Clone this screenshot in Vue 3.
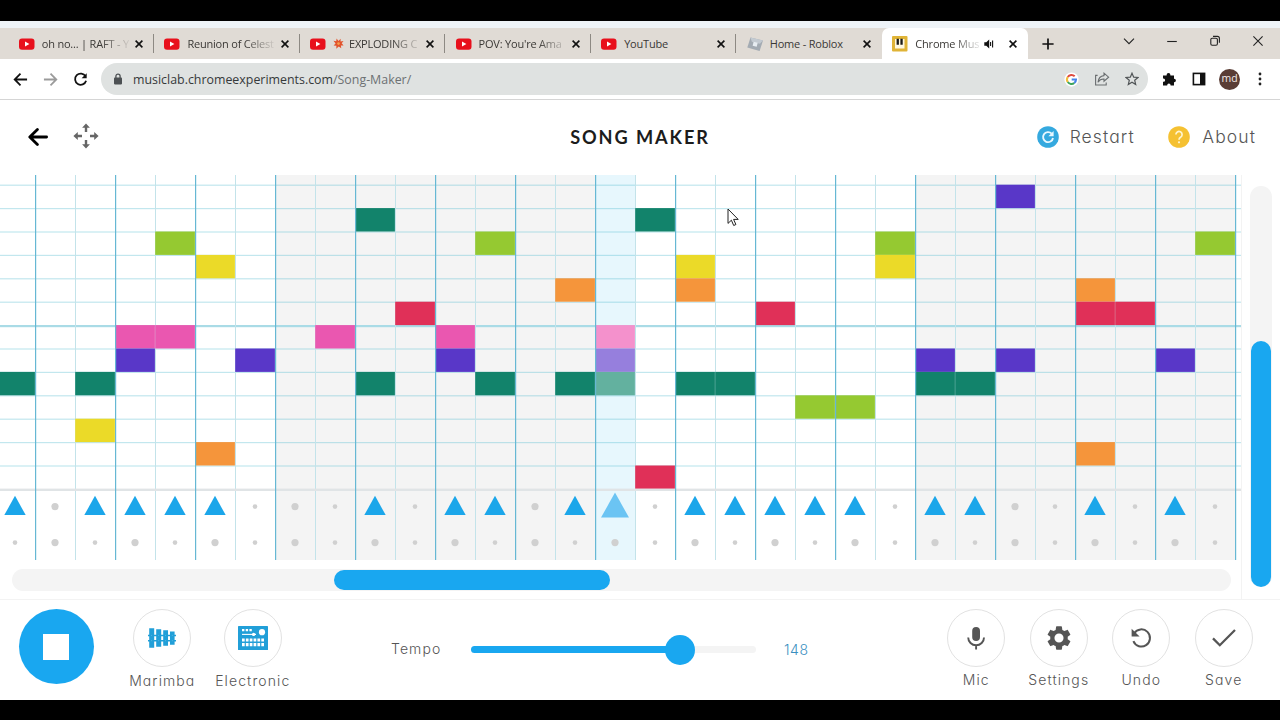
<template>
  <div class="screen">
    <div class="window">
      <div class="tab-strip">
        <div v-for="tab in tabs" :key="tab.title" class="tab" :class="{ active: tab.active }">
          <svg v-if="tab.icon === 'youtube'" class="favicon" viewBox="0 0 16 16">
            <rect x="0" y="2.5" width="15.5" height="11.2" rx="3" fill="#e8101c" />
            <path d="M6 5.6v5l4.4-2.5z" fill="#fff" />
          </svg>
          <svg v-else-if="tab.icon === 'roblox'" class="favicon" viewBox="0 0 16 16">
            <path d="M3.5 1.5L16 4.6 12.6 15 .3 11.6z" fill="#a3abb3" />
            <path d="M3.5 1.5L16 4.6l-3.2 3.2-8-2z" fill="#c3cad1" />
            <path d="M6.6 5.8l4.1 1-1 4-4.1-1z" fill="#e7edf2" />
          </svg>
          <svg v-else class="favicon" viewBox="0 0 16 16">
            <rect width="15.5" height="15.5" rx="1" fill="#e0b437" />
            <rect x="3" y="3" width="9.5" height="9.5" fill="#fff8df" />
            <path d="M4.6 2.8h2.3v6H4.6zM8.4 2.8h2.3v6H8.4z" fill="#1b1a18" />
          </svg>
          <div class="tab-title" :class="{ faded: tab.faded }">
            <svg v-if="tab.burst" class="burst" viewBox="0 0 12 12">
              <path d="M6 3.2L8.3.7l0 3 3.2-.5-2 2.6 2 2.3-2.9.1.4 2.9L6.2 9.2 3.6 11.6l.1-3.2L.6 8.1l2.2-2.2L.5 3l3 .5L3.9.6z" fill="#e2532c" />
              <circle cx="6" cy="6" r="1.5" fill="#f6a04c" />
            </svg>
            <span>{{ tab.title }}</span>
          </div>
          <svg v-if="tab.active" class="speaker" viewBox="0 0 10 10">
            <path d="M.3 3.2h2L5.2.6v8.8L2.3 6.8h-2z" fill="#111" />
            <path d="M6.6 3v4M8.6 1.6v6.8" stroke="#111" stroke-width="1.1" />
          </svg>
          <svg class="close" viewBox="0 0 10 10">
            <path d="M1.6 1.6l6.8 6.8M8.4 1.6L1.6 8.4" stroke="#111" stroke-width="1.6" />
          </svg>
        </div>
        <svg class="new-tab" viewBox="0 0 12 12">
          <path d="M6 .4v11.2M.4 6h11.2" stroke="#111" stroke-width="1.7" />
        </svg>
        <div class="window-buttons">
          <svg viewBox="0 0 12 12"><path d="M1 3.6l5 5 5-5" /></svg>
          <svg viewBox="0 0 12 12"><path d="M1.2 6.5h9.6" /></svg>
          <svg viewBox="0 0 12 12">
            <rect x="1.8" y="3.2" width="6.6" height="7" rx="1.4" />
            <path d="M4 1.4h4.4q2 0 2 2v4.4" />
          </svg>
          <svg viewBox="0 0 12 12"><path d="M1.4 1.4l9.2 9.2M10.6 1.4L1.4 10.6" /></svg>
        </div>
      </div>

      <div class="toolbar">
        <svg class="nav-icon" viewBox="0 0 16 16"><path d="M15 8H2M8 1.8L1.8 8 8 14.2" stroke="#111" /></svg>
        <svg class="nav-icon" viewBox="0 0 16 16"><path d="M1 8h13M8 1.8L14.2 8 8 14.2" stroke="#9b9b9b" /></svg>
        <svg class="nav-icon" viewBox="0 0 16 16">
          <path d="M13.4 4.6A6 6 0 1 0 14 9.4" stroke="#111" />
          <path d="M14.6 1.2v5.4H9.2z" fill="#111" />
        </svg>
        <div class="omnibox">
          <svg class="lock" viewBox="0 0 10 12">
            <rect x="1" y="4.6" width="8" height="6.8" rx=".8" fill="#4c5053" />
            <path d="M2.9 5V3.2a2.1 2.1 0 0 1 4.2 0V5" fill="none" stroke="#4c5053" stroke-width="1.3" />
          </svg>
          <div class="url">musiclab.chromeexperiments.com<span>/Song-Maker/</span></div>
          <svg class="google" viewBox="0 0 16 16">
            <circle cx="8" cy="8" r="7.6" fill="#fff" />
            <path d="M11.4 4.6A4.8 4.8 0 0 0 4 5.3" stroke="#de4b3f" />
            <path d="M4 5.3a4.8 4.8 0 0 0 0 5.4" stroke="#f1bd3a" />
            <path d="M4 10.7a4.8 4.8 0 0 0 7 1" stroke="#3da45b" />
            <path d="M11 11.7A4.8 4.8 0 0 0 12.8 8H8.2" stroke="#4683e8" />
          </svg>
          <svg class="share" viewBox="0 0 16 16">
            <path d="M3.6 4.4H1.6v9.6h10.6v-2.6" />
            <path d="M10 2.2l4.6 4-4.6 4V8Q6.2 7.8 4 11.2 4.6 5.2 10 4.6z" />
          </svg>
          <svg class="star" viewBox="0 0 14 14">
            <path d="M7 1.2l1.7 4 4.3.3-3.3 2.8 1 4.3L7 10.3l-3.7 2.3 1-4.3L1 5.5l4.3-.3z" />
          </svg>
        </div>
        <svg class="puzzle" viewBox="0 0 14 14">
          <path d="M1 3.6h3.6V3a1.9 1.9 0 0 1 3.8 0v.6H12v3.2h.2a1.7 1.7 0 0 1 0 3.4H12v3.4H8.6v-.4a1.7 1.7 0 0 0-3.4 0v.4H1v-3.8h.5a1.6 1.6 0 0 0 0-3.2H1z" fill="#111" />
        </svg>
        <svg class="side-panel" viewBox="0 0 14 14">
          <rect x="1.4" y="1.4" width="11.2" height="11.2" fill="#fff" stroke="#111" stroke-width="1.6" />
          <rect x="8" y="1" width="5" height="12" fill="#111" />
        </svg>
        <div class="avatar">md</div>
        <svg class="kebab" viewBox="0 0 4 14">
          <circle cx="2" cy="2" r="1.4" /><circle cx="2" cy="7" r="1.4" /><circle cx="2" cy="12" r="1.4" />
        </svg>
      </div>

      <header class="app-header">
        <div class="header-left">
          <svg class="back" viewBox="0 0 20 20">
            <path d="M18.6 10H2.4M9.4 2.4L1.8 10l7.6 7.6" fill="none" stroke="#000" stroke-width="2.8" stroke-linecap="round" stroke-linejoin="round" />
          </svg>
          <svg class="move" viewBox="0 0 26 26">
            <path d="M13 9V3.6M13 17v5.4M9 13H3.6M17 13h5.4" stroke="#666" stroke-width="2.4" />
            <path d="M13 .4l3.9 4.4H9.1zM13 25.6l3.9-4.4H9.1zM.4 13l4.4-3.9v7.8zM25.6 13l-4.4-3.9v7.8z" fill="#666" />
          </svg>
        </div>
        <h1>SONG MAKER</h1>
        <div class="header-right">
          <svg class="round" viewBox="0 0 22 22">
            <circle cx="11" cy="11" r="10.8" fill="#35a9df" />
            <path d="M14.7 7.7A5 5 0 1 0 16 12" fill="none" stroke="#e9f8ff" stroke-width="1.9" />
            <path d="M16.6 5v5.2h-5.2z" fill="#e9f8ff" />
          </svg>
          <span class="restart">Restart</span>
          <svg class="round" viewBox="0 0 22 22">
            <circle cx="11" cy="11" r="10.8" fill="#f5c132" />
            <path d="M7.9 8.6a3.1 3.1 0 1 1 4.9 2.5q-1.8 1.1-1.8 2.6" fill="none" stroke="#fff5d0" stroke-width="1.7" />
            <circle cx="11" cy="16.3" r="1.1" fill="#fff5d0" />
          </svg>
          <span class="about">About</span>
        </div>
      </header>

      <div class="workspace">
        <div class="song">
          <svg class="grid" width="1241" height="385" viewBox="0 0 1241 385">
            <rect width="1241" height="385" fill="#fff" />
            <rect x="275" width="320" height="385" fill="#f4f4f4" />
            <rect x="915" width="320" height="385" fill="#f4f4f4" />
            <rect x="595" width="40" height="385" fill="#e7f7fd" />

            <rect v-for="r in 13" :key="'h' + r" x="0" :y="rowY(r - 1) - 0.1" width="1241" height="1.2" fill="#4db8cc" opacity="0.34" />
            <rect x="0" :y="rowY(6) - 0.1" width="1241" height="2.2" fill="#a9dbe6" />
            <rect v-for="c in 15" :key="'l' + c" :x="80 * c - 5" y="0" width="1" height="385" fill="#c3e3ea" />

            <rect
              v-for="n in notes"
              :key="n.row + '-' + n.col"
              :x="colX(n.col)"
              :y="rowY(n.row)"
              width="39.7"
              :height="rowHeight"
              :fill="n.color"
            />
            <rect x="0" y="313.6" width="1241" height="2.4" fill="#e0e4e6" />
            <rect v-for="c in 16" :key="'b' + c" :x="80 * c - 45" y="0" width="1.2" height="385" fill="#66b8d4" />

            <template v-for="c in 31" :key="'p' + c">
              <path v-if="c - 1 === playhead" d="M615 317.6l14 25h-28z" fill="#6bc4f3" />
              <path v-else-if="beats.includes(c - 1)" :d="`M${colX(c - 1) + 19.8} 320.8l10.7 19.3h-21.4z`" fill="#1ba6ea" />
              <circle v-else :cx="colX(c - 1) + 19.8" cy="331.6" :r="dotSize(c - 1)" fill="#d0d0d0" />
              <circle :cx="colX(c - 1) + 19.8" cy="367.6" :r="dotSize(c - 1)" fill="#d0d0d0" />
            </template>
          </svg>
          <div class="h-scroll"><div class="h-thumb"></div></div>
        </div>
        <div class="side">
          <div class="v-scroll"><div class="v-thumb"></div></div>
        </div>
        <svg class="cursor" viewBox="0 0 12 19">
          <path d="M1 1v14.4l3.4-3.2 2.3 5.3 2.2-1-2.3-5.1h4.6z" fill="#fff" stroke="#222" stroke-width="1" />
        </svg>
      </div>

      <footer class="controls">
        <button class="stop"><span></span></button>
        <div class="instruments">
          <div class="control">
            <div class="ring">
              <svg width="30" height="22" viewBox="0 0 30 22">
                <path d="M1 8.4h28M1 13.7h28" stroke="#219fd8" stroke-width="1.5" />
                <path d="M2.2 1.2h5v19.6h-5zM9.2 2.3h5v17.4h-5zM16.2 3.3h4.8v15.4h-4.8zM23 4.4h4.6v13.4H23z" fill="#219fd8" />
                <path d="M4.7 8.4h.01M4.7 13.7h.01M11.7 8.4h.01M11.7 13.7h.01M18.6 8.4h.01M18.6 13.7h.01M25.3 8.4h.01M25.3 13.7h.01" stroke="#5cbae5" stroke-width="1" stroke-linecap="round" />
              </svg>
            </div>
            <span>Marimba</span>
          </div>
          <div class="control">
            <div class="ring">
              <svg width="30" height="24" viewBox="0 0 30 24">
                <rect width="30" height="24" rx=".6" fill="#219fd8" />
                <circle cx="24" cy="6.2" r="3.1" fill="#fff" />
                <path d="M4 4.2h2.4M7.7 4.2h2.4M11.4 4.2h2.4" stroke="#fff" stroke-width="2.2" />
                <path d="M4 8.4h14" stroke="#fff" stroke-width="1.1" />
                <circle cx="15.6" cy="8.4" r="1.6" fill="#fff" />
                <path d="M4 14h22M4 18.6h22" stroke="#fff" stroke-width="3.2" stroke-dasharray="2.7 1.16" />
              </svg>
            </div>
            <span>Electronic</span>
          </div>
        </div>
        <div class="tempo">
          <span class="tempo-label">Tempo</span>
          <div class="slider">
            <div class="fill" :style="{ width: tempoPercent + '%' }"></div>
            <div class="knob"></div>
          </div>
          <span class="tempo-value">{{ tempo }}</span>
        </div>
        <div class="actions">
          <div class="control">
            <div class="ring">
              <svg width="24" height="26" viewBox="0 0 24 26">
                <rect x="8.2" y="2" width="7.8" height="14" rx="3.9" fill="#555" />
                <path d="M4.2 12.4a7.9 7.9 0 0 0 15.8 0M12.1 20.3v4.3" fill="none" stroke="#555" stroke-width="1.9" />
              </svg>
            </div>
            <span>Mic</span>
          </div>
          <div class="control">
            <div class="ring">
              <svg width="28" height="28" viewBox="0 0 24 24">
                <path fill="#555" d="M19.43 12.98c.04-.32.07-.64.07-.98s-.03-.66-.07-.98l2.11-1.65c.19-.15.24-.42.12-.64l-2-3.46c-.12-.22-.39-.3-.61-.22l-2.49 1c-.52-.4-1.08-.73-1.69-.98l-.38-2.65A.49.49 0 0 0 14 2h-4c-.25 0-.46.18-.49.42l-.38 2.65c-.61.25-1.17.59-1.69.98l-2.49-1c-.23-.09-.49 0-.61.22l-2 3.46c-.13.22-.07.49.12.64l2.11 1.65c-.04.32-.07.65-.07.98s.03.66.07.98l-2.11 1.65c-.19.15-.24.42-.12.64l2 3.46c.12.22.39.3.61.22l2.49-1c.52.4 1.08.73 1.69.98l.38 2.65c.03.24.24.42.49.42h4c.25 0 .46-.18.49-.42l.38-2.65c.61-.25 1.17-.59 1.69-.98l2.49 1c.23.09.49 0 .61-.22l2-3.46c.12-.22.07-.49-.12-.64zM12 15.9a3.9 3.9 0 1 1 0-7.8 3.9 3.9 0 0 1 0 7.8z" />
              </svg>
            </div>
            <span>Settings</span>
          </div>
          <div class="control">
            <div class="ring">
              <svg width="24" height="24" viewBox="0 0 24 24">
                <path d="M5.2 7.2A8.6 8.6 0 1 1 4.4 15.2" fill="none" stroke="#555" stroke-width="2" />
                <path d="M2.6 2.8v7.6h8z" fill="#555" />
              </svg>
            </div>
            <span>Undo</span>
          </div>
          <div class="control">
            <div class="ring">
              <svg width="26" height="22" viewBox="0 0 26 22">
                <path d="M2 11.4l6.8 6.8L24 3" fill="none" stroke="#555" stroke-width="2.3" />
              </svg>
            </div>
            <span>Save</span>
          </div>
        </div>
      </footer>
    </div>
  </div>
</template>

<script setup>
import { ref, computed } from 'vue'

const tabs = [
  { title: 'oh no... | RAFT - Y', icon: 'youtube', faded: true },
  { title: 'Reunion of Celest', icon: 'youtube', faded: true },
  { title: 'EXPLODING C', icon: 'youtube', burst: true, faded: true },
  { title: "POV: You're Ama", icon: 'youtube', faded: true },
  { title: 'YouTube', icon: 'youtube' },
  { title: 'Home - Roblox', icon: 'roblox' },
  { title: 'Chrome Mus', icon: 'music', active: true, faded: true }
]

const rowHeight = 23.4
const playhead = 15

const colX = (col) => col * 40 - 4.8
const rowY = (row) => 9.7 + row * rowHeight
const dotSize = (col) => (col % 2 ? 3.6 : 2.3)

// one entry per pitch, top to bottom
const rows = [
  { color: '#5937c8', cols: [25] },
  { color: '#12836b', cols: [9, 16] },
  { color: '#95c931', cols: [4, 12, 22, 30] },
  { color: '#ebda28', cols: [5, 17, 22] },
  { color: '#f5953b', cols: [14, 17, 27] },
  { color: '#e03058', cols: [10, 19, 27, 28] },
  { color: '#ea57b0', lit: '#f491cc', cols: [3, 4, 8, 11, 15] },
  { color: '#5937c8', lit: '#967fdd', cols: [3, 6, 11, 15, 23, 25, 29] },
  { color: '#12836b', lit: '#63b19f', cols: [0, 2, 9, 12, 14, 15, 17, 18, 23, 24] },
  { color: '#95c931', cols: [20, 21] },
  { color: '#ebda28', cols: [2] },
  { color: '#f5953b', cols: [5, 27] },
  { color: '#e03058', cols: [16] }
]

const notes = rows.flatMap((r, row) =>
  r.cols.map((col) => ({ row, col, color: col === playhead ? r.lit : r.color }))
)

const beats = [0, 2, 3, 4, 5, 9, 11, 12, 14, 15, 17, 18, 19, 20, 21, 23, 24, 27, 29]

const tempo = ref(148)
const tempoPercent = computed(() => (tempo.value / 202) * 100)
</script>

<style>
body {
  margin: 0;
  background: #000;
}
</style>

<style scoped>
.screen {
  box-sizing: border-box;
  width: 1280px;
  height: 720px;
  padding: 21px 0 20px;
  background: #000;
  overflow: hidden;
}

.window {
  display: flex;
  flex-direction: column;
  height: 679px;
  background: #fff;
}

svg {
  display: block;
  flex-shrink: 0;
}

.tab-strip {
  box-sizing: border-box;
  display: flex;
  align-items: center;
  height: 38px;
  padding-left: 8.4px;
  border-top: 7px solid #eef3f7;
  background: #e0dbd5;
  font-family: 'Open Sans', 'Noto Sans', sans-serif;
}

.tab {
  position: relative;
  box-sizing: border-box;
  display: flex;
  align-items: center;
  width: 145.6px;
  height: 31px;
  padding: 0 10px 0 10.4px;
}

.tab:not(.active)::after {
  content: '';
  position: absolute;
  right: 0;
  top: 6px;
  width: 1px;
  height: 19px;
  background: #8d8983;
}

.tab:nth-child(6)::after {
  display: none;
}

.tab.active {
  background: #fff;
  border-radius: 7px 7px 0 0;
}

.favicon {
  width: 16px;
  height: 16px;
}

.tab-title {
  display: flex;
  align-items: center;
  flex: 1;
  height: 20px;
  margin: -1px 0 0 7px;
  white-space: nowrap;
  font-size: 11px;
  letter-spacing: -0.2px;
  color: #3a3835;
}

.tab-title.faded {
  -webkit-mask-image: linear-gradient(to right, #000 58px, transparent 90px);
  mask-image: linear-gradient(to right, #000 58px, transparent 90px);
}

.active .tab-title.faded {
  -webkit-mask-image: linear-gradient(to right, #000 38px, transparent 68px);
  mask-image: linear-gradient(to right, #000 38px, transparent 68px);
}

.burst {
  width: 11px;
  height: 11px;
  margin-right: 5px;
}

.close {
  width: 10px;
  height: 10px;
}

.speaker {
  width: 10px;
  height: 10px;
  margin-right: 14px;
}

.new-tab {
  width: 12px;
  height: 12px;
  margin-left: 14.5px;
}

.window-buttons {
  display: flex;
  gap: 31px;
  margin-left: auto;
  padding: 0 16px 5px 0;
}

.window-buttons svg {
  width: 12px;
  height: 12px;
  fill: none;
  stroke: #222;
  stroke-width: 1.1;
}

.toolbar {
  box-sizing: border-box;
  display: flex;
  align-items: center;
  height: 41px;
  padding: 0 18px 0 13px;
  border-bottom: 1px solid #d5d5d5;
  background: #fff;
}

.nav-icon {
  width: 15px;
  height: 15px;
  margin-right: 15px;
  fill: none;
  stroke-width: 1.9;
}

.omnibox {
  box-sizing: border-box;
  display: flex;
  align-items: center;
  width: 1047px;
  height: 32px;
  margin-left: -2px;
  padding: 0 9px 0 12px;
  border-radius: 16px;
  background: #dfe2e1;
}

.lock {
  width: 10px;
  height: 12px;
}

.url {
  margin-left: 10px;
  font-family: 'Open Sans', 'Noto Sans', sans-serif;
  font-size: 12.4px;
  color: #36393b;
}

.url span {
  color: #6d7173;
}

.google {
  width: 15px;
  height: 15px;
  margin-left: auto;
  fill: none;
  stroke-width: 2.2;
}

.share {
  width: 16px;
  height: 16px;
  margin-left: 15px;
  fill: none;
  stroke: #6a6e70;
  stroke-width: 1.1;
}

.star {
  width: 14px;
  height: 14px;
  margin-left: 15px;
  fill: none;
  stroke: #505456;
  stroke-width: 1.2;
}

.puzzle {
  width: 14px;
  height: 14px;
  margin-left: 14px;
}

.side-panel {
  width: 14px;
  height: 14px;
  margin-left: 16px;
}

.avatar {
  width: 21px;
  height: 21px;
  margin-left: 13px;
  border-radius: 50%;
  background: #5a3d35;
  color: #f3ebe8;
  font-family: 'Open Sans', sans-serif;
  font-size: 10.5px;
  line-height: 19px;
  text-align: center;
}

.kebab {
  width: 4px;
  height: 14px;
  margin-left: 18px;
  fill: #222;
}

.app-header {
  box-sizing: border-box;
  display: grid;
  grid-template-columns: 1fr auto 1fr;
  align-items: center;
  height: 75px;
  padding-bottom: 2px;
  font-family: Inter, sans-serif;
  font-feature-settings: 'cv11';
}

.header-left,
.header-right {
  display: flex;
  align-items: center;
}

.header-left {
  padding-left: 28px;
}

.back {
  width: 20px;
  height: 20px;
  margin-right: 25px;
}

.move {
  width: 26px;
  height: 26px;
  margin-top: -2px;
}

h1 {
  margin: 0;
  font-family: Lato, sans-serif;
  font-size: 18.2px;
  font-weight: 700;
  letter-spacing: 1.9px;
  color: #1c1c1c;
}

.header-right {
  justify-content: flex-end;
  padding-right: 24px;
  color: #555;
  font-size: 17.5px;
  font-weight: 350;
  letter-spacing: 1.1px;
}

.round {
  width: 22px;
  height: 22px;
}

.restart {
  margin: 0 33.5px 0 11px;
}

.about {
  margin-left: 12px;
}

.workspace {
  position: relative;
  display: flex;
  height: 424px;
}

.song {
  width: 1241px;
  border-right: 1px solid #f3f3f3;
}

.h-scroll {
  width: 1219px;
  height: 22px;
  margin: 9px 0 0 11.5px;
  border-radius: 11px;
  background: #f4f4f4;
}

.h-thumb {
  position: relative;
  top: 1px;
  width: 276px;
  height: 20px;
  margin-left: 322.5px;
  border-radius: 10px;
  background: #19a7f0;
}

.side {
  flex: 1;
}

.v-scroll {
  display: flex;
  align-items: flex-end;
  justify-content: center;
  width: 22px;
  height: 401px;
  margin: 11px 0 0 8px;
  border-radius: 11px;
  background: #f4f4f4;
}

.v-thumb {
  width: 20px;
  height: 246px;
  border-radius: 10px;
  background: #19a7f0;
}

.cursor {
  position: absolute;
  left: 727px;
  top: 33px;
  width: 12px;
  height: 19px;
}

.controls {
  box-sizing: border-box;
  display: flex;
  height: 101px;
  border-top: 1px solid #f3f3f3;
  font-family: Inter, sans-serif;
  font-feature-settings: 'cv11';
  font-size: 14px;
  font-weight: 350;
  letter-spacing: 1.1px;
  color: #555;
}

.stop {
  display: flex;
  align-items: center;
  justify-content: center;
  width: 75px;
  height: 75px;
  margin: 9px 0 0 18.5px;
  padding: 0;
  border: none;
  border-radius: 50%;
  background: #19a7f0;
}

.stop span {
  width: 26px;
  height: 26px;
  background: #fff;
}

.instruments,
.actions {
  display: flex;
  padding-top: 9px;
}

.instruments {
  margin-left: 23.5px;
}

.control {
  display: flex;
  flex-direction: column;
  align-items: center;
  width: 90.5px;
}

.control > span {
  margin-top: 5px;
  line-height: 18px;
}

.ring {
  box-sizing: border-box;
  display: flex;
  align-items: center;
  justify-content: center;
  width: 58px;
  height: 58px;
  border: 1px solid #e2e2e2;
  border-radius: 50%;
}

.tempo {
  display: flex;
  align-items: center;
  height: 99px;
  margin-left: 93px;
}

.tempo-label {
  width: 80px;
  padding-bottom: 2px;
}

.slider {
  display: flex;
  align-items: center;
  width: 285px;
  height: 7px;
  border-radius: 4px;
  background: #f4f4f4;
}

.fill {
  flex-shrink: 0;
  height: 7px;
  border-radius: 4px;
  background: #19a7f0;
}

.knob {
  flex-shrink: 0;
  width: 30px;
  height: 30px;
  margin-left: -15px;
  border-radius: 50%;
  background: #19a7f0;
}

.tempo-value {
  margin-left: 28px;
  letter-spacing: 0.6px;
  color: #3a8fbf;
}

.actions {
  margin-left: auto;
  padding-right: 15px;
}

.actions .control {
  width: 82.5px;
}

.actions .control > span {
  margin-top: 4px;
}
</style>
